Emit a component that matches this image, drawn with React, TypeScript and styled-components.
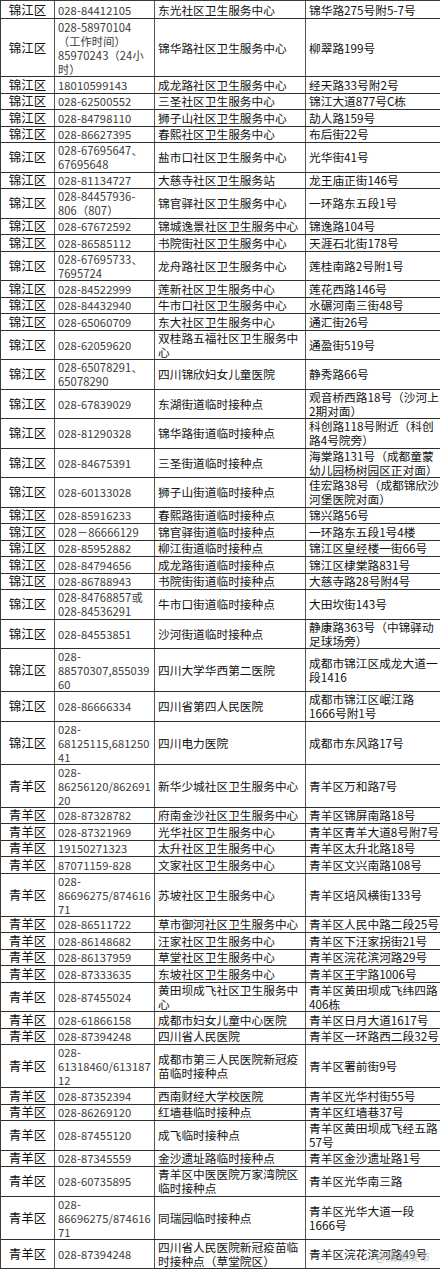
import React from "react";
import styled, { createGlobalStyle } from "styled-components";

type Site = [string, string[], string[], string[]];

const J = "锦江区";
const Q = "青羊区";

const sites: Site[] = [
  [J, ["028-84412105"], ["东光社区卫生服务中心"], ["锦华路275号附5-7号"]],
  [J, ["028-58970104", "（工作时间）", "85970243（24小", "时）"], ["锦华路社区卫生服务中心"], ["柳翠路199号"]],
  [J, ["18010599143"], ["成龙路社区卫生服务中心"], ["经天路33号附2号"]],
  [J, ["028-62500552"], ["三圣社区卫生服务中心"], ["锦江大道877号C栋"]],
  [J, ["028-84798110"], ["狮子山社区卫生服务中心"], ["劼人路159号"]],
  [J, ["028-86627395"], ["春熙社区卫生服务中心"], ["布后街22号"]],
  [J, ["028-67695647、", "67695648"], ["盐市口社区卫生服务中心"], ["光华街41号"]],
  [J, ["028-81134727"], ["大慈寺社区卫生服务站"], ["龙王庙正街146号"]],
  [J, ["028-84457936-", "806（807）"], ["锦官驿社区卫生服务中心"], ["一环路东五段1号"]],
  [J, ["028-67672592"], ["锦城逸景社区卫生服务中心"], ["锦逸路104号"]],
  [J, ["028-86585112"], ["书院街社区卫生服务中心"], ["天涯石北街178号"]],
  [J, ["028-67695733、", "7695724"], ["龙舟路社区卫生服务中心"], ["莲桂南路2号附1号"]],
  [J, ["028-84522999"], ["莲新社区卫生服务中心"], ["莲花西路146号"]],
  [J, ["028-84432940"], ["牛市口社区卫生服务中心"], ["水碾河南三街48号"]],
  [J, ["028-65060709"], ["东大社区卫生服务中心"], ["通汇街26号"]],
  [J, ["028-62059620"], ["双桂路五福社区卫生服务中", "心"], ["通盈街519号"]],
  [J, ["028-65078291、", "65078290"], ["四川锦欣妇女儿童医院"], ["静秀路66号"]],
  [J, ["028-67839029"], ["东湖街道临时接种点"], ["观音桥西路18号（沙河上", "2期对面）"]],
  [J, ["028-81290328"], ["锦华路街道临时接种点"], ["科创路118号附近（科创", "路4号院旁）"]],
  [J, ["028-84675391"], ["三圣街道临时接种点"], ["海棠路131号（成都童蒙", "幼儿园杨树园区正对面）"]],
  [J, ["028-60133028"], ["狮子山街道临时接种点"], ["佳宏路38号（成都锦欣沙", "河堡医院对面）"]],
  [J, ["028-85916233"], ["春熙路街道临时接种点"], ["锦兴路56号"]],
  [J, ["028－86666129"], ["锦官驿街道临时接种点"], ["一环路东五段1号4楼"]],
  [J, ["028-85952882"], ["柳江街道临时接种点"], ["锦江区皇经楼一街66号"]],
  [J, ["028-84794656"], ["成龙路街道临时接种点"], ["锦江区棣棠路831号"]],
  [J, ["028-86788943"], ["书院街街道临时接种点"], ["大慈寺路28号附4号"]],
  [J, ["028-84768857或", "028-84536291"], ["牛市口街道临时接种点"], ["大田坎街143号"]],
  [J, ["028-84553851"], ["沙河街道临时接种点"], ["静康路363号（中锦驿动", "足球场旁）"]],
  [J, ["028-", "88570307,855039", "60"], ["四川大学华西第二医院"], ["成都市锦江区成龙大道一", "段1416"]],
  [J, ["028-86666334"], ["四川省第四人民医院"], ["成都市锦江区岷江路", "1666号附1号"]],
  [J, ["028-", "68125115,681250", "41"], ["四川电力医院"], ["成都市东风路17号"]],
  [Q, ["028-", "86256120/862691", "20"], ["新华少城社区卫生服务中心"], ["青羊区万和路7号"]],
  [Q, ["028-87328782"], ["府南金沙社区卫生服务中心"], ["青羊区锦屏南路18号"]],
  [Q, ["028-87321969"], ["光华社区卫生服务中心"], ["青羊区青羊大道8号附7号"]],
  [Q, ["19150271323"], ["太升社区卫生服务中心"], ["青羊区太升北路18号"]],
  [Q, ["87071159-828"], ["文家社区卫生服务中心"], ["青羊区文兴南路108号"]],
  [Q, ["028-", "86696275/874616", "71"], ["苏坡社区卫生服务中心"], ["青羊区培风横街133号"]],
  [Q, ["028-86511722"], ["草市御河社区卫生服务中心"], ["青羊区人民中路二段25号"]],
  [Q, ["028-86148682"], ["汪家社区卫生服务中心"], ["青羊区下汪家拐街21号"]],
  [Q, ["028-86137959"], ["草堂社区卫生服务中心"], ["青羊区浣花滨河路29号"]],
  [Q, ["028-87333635"], ["东坡社区卫生服务中心"], ["青羊区王宇路1006号"]],
  [Q, ["028-87455024"], ["黄田坝成飞社区卫生服务中", "心"], ["青羊区黄田坝成飞纬四路", "406栋"]],
  [Q, ["028-61866158"], ["成都市妇女儿童中心医院"], ["青羊区日月大道1617号"]],
  [Q, ["028-87394248"], ["四川省人民医院"], ["青羊区一环路西二段32号"]],
  [Q, ["028-", "61318460/613187", "12"], ["成都市第三人民医院新冠疫", "苗临时接种点"], ["青羊区署前街9号"]],
  [Q, ["028-87352394"], ["西南财经大学校医院"], ["青羊区光华村街55号"]],
  [Q, ["028-86269120"], ["红墙巷临时接种点"], ["青羊区红墙巷37号"]],
  [Q, ["028-87455120"], ["成飞临时接种点"], ["青羊区黄田坝成飞经五路", "57号"]],
  [Q, ["028-87345559"], ["金沙遗址路临时接种点"], ["青羊区金沙遗址路1号"]],
  [Q, ["028-60735895"], ["青羊区中医医院万家湾院区", "临时接种点"], ["青羊区光华南三路"]],
  [Q, ["028-", "86696275/874616", "71"], ["同瑞园临时接种点"], ["青羊区光华大道一段", "1666号"]],
  [Q, ["028-87394248"], ["四川省人民医院新冠疫苗临", "时接种点（草堂院区）"], ["青羊区浣花滨河路49号"]],
];

const GlobalStyle = createGlobalStyle`
  html, body {
    margin: 0;
    padding: 0;
    background: #ffffff;
    overflow: hidden;
  }
  body {
    font-family: "Noto Sans CJK SC", "Noto Sans", sans-serif;
  }
`;

const Sheet = styled.div`
  width: 442px;
  border-left: 1px solid #3a3a3a;
  border-top: 1px solid #3a3a3a;
`;

const Row = styled.div<{ $h: number }>`
  display: grid;
  grid-template-columns: 54px 100px 151px 136px;
  height: ${(p) => p.$h}px;
  border-bottom: 1px solid #2e2e2e;
  box-sizing: border-box;
`;

const Cell = styled.div<{ $center?: boolean; $muted?: boolean }>`
  display: flex;
  align-items: center;
  justify-content: ${(p) => (p.$center ? "center" : "flex-start")};
  box-sizing: border-box;
  border-right: 1px solid #555;
  padding-left: ${(p) => (p.$center ? "0" : "3px")};
  white-space: nowrap;
  font-size: ${(p) => (p.$center ? "12.5px" : "11.7px")};
  line-height: 14px;
  color: ${(p) => (p.$muted ? "#3a3a3a" : "#111")};
`;

const Phone = styled.span`
  font-size: 11.2px;
  letter-spacing: 0.1px;
`;

const Watermark = styled.div`
  position: fixed;
  right: 10px;
  bottom: 6px;
  font-size: 11px;
  color: rgba(200, 200, 200, 0.75);
  text-shadow: 0 0 1px rgba(120, 120, 120, 0.4);
  pointer-events: none;
`;

const lines = (arr: string[]) =>
  arr.map((t, i) => (
    <React.Fragment key={i}>
      {i > 0 && <br />}
      {t}
    </React.Fragment>
  ));

// row heights measured off the sheet: 1, 2, 3 and 4 text lines
const heights = [0, 16.5, 29.5, 43, 58];
const rowHeight = (n: number, i: number) => (i === 0 ? 18 : heights[n]);

export default function App() {
  return (
    <>
      <GlobalStyle />
      <Sheet>
        {sites.map(([district, phone, name, addr], i) => {
          const n = Math.max(phone.length, name.length, addr.length);
          return (
            <Row key={i} $h={rowHeight(n, i)}>
              <Cell $center>{district}</Cell>
              <Cell $muted>
                <Phone>{lines(phone)}</Phone>
              </Cell>
              <Cell>
                <span>{lines(name)}</span>
              </Cell>
              <Cell>
                <span>{lines(addr)}</span>
              </Cell>
            </Row>
          );
        })}
      </Sheet>
      <Watermark>@成都发布</Watermark>
    </>
  );
}
